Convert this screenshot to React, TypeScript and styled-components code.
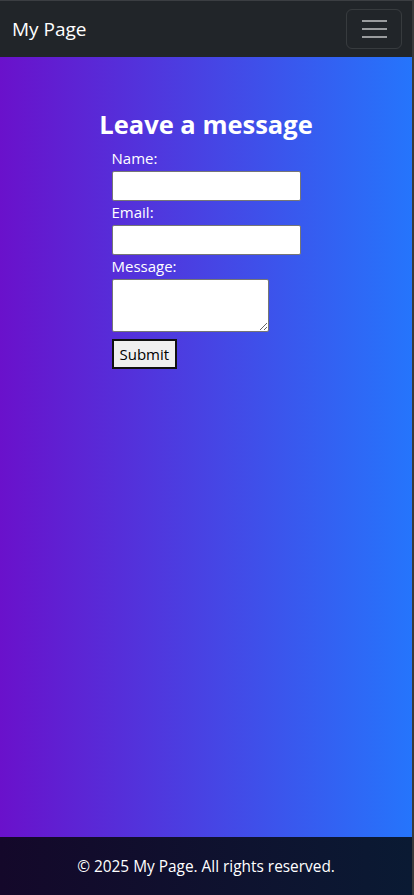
import { FC } from "react";
import styled, { createGlobalStyle } from "styled-components";

const GlobalStyle = createGlobalStyle`
  * {
    box-sizing: border-box;
  }

  body {
    margin: 0;
    font-family: "Open Sans", "Noto Sans", sans-serif;
    background: #212529;
  }
`;

const Page = styled.div`
  display: flex;
  flex-direction: column;
  min-height: 100vh;
  border-top: 1px solid #3b3e42;
  border-right: 2px solid #3a3a3a;
`;

const NavBar = styled.header`
  display: flex;
  align-items: center;
  justify-content: space-between;
  height: 56px;
  padding: 0 10px 0 12px;
  background: #212529;
`;

const Brand = styled.a`
  color: #fff;
  font-size: 19px;
  text-decoration: none;
`;

const Toggler = styled.button`
  display: flex;
  flex-direction: column;
  align-items: center;
  justify-content: center;
  gap: 6px;
  width: 56px;
  height: 40px;
  border: 1px solid rgba(255, 255, 255, 0.1);
  border-radius: 6px;
  background: transparent;
  cursor: pointer;

  span {
    display: block;
    width: 25px;
    height: 2px;
    background: rgba(255, 255, 255, 0.55);
  }
`;

const Main = styled.main`
  flex: 1;
  display: flex;
  flex-direction: column;
  align-items: center;
  padding-top: 50px;
  background: linear-gradient(to right, #6a11cb, #2575fc);
  color: #fff;
`;

const Title = styled.h2`
  margin: 0 0 6px;
  font-size: 25.5px;
  font-weight: 700;
  line-height: 34px;
`;

const Form = styled.form`
  display: flex;
  flex-direction: column;
  align-items: flex-start;
  width: 189px;
`;

const Label = styled.label`
  display: block;
  margin: 1px 0 3px;
  font-size: 15px;
  line-height: 20px;
`;

const Input = styled.input`
  width: 189px;
  height: 30px;
  padding: 2px 4px;
  border: 1px solid #767676;
  border-radius: 2px;
  background: #fff;
  font-size: 15px;
`;

const TextArea = styled.textarea`
  width: 157px;
  height: 53px;
  padding: 2px 4px;
  border: 1px solid #767676;
  border-radius: 2px;
  background: #fff;
  font-size: 15px;
  resize: both;
`;

const SubmitButton = styled.button`
  margin-top: 7px;
  height: 30px;
  padding: 0 6px;
  border: 2px solid #111;
  border-radius: 0;
  background: #efefef;
  color: #000;
  font-family: "Open Sans", "Noto Sans", sans-serif;
  font-size: 15px;
`;

const Footer = styled.footer`
  display: flex;
  align-items: center;
  justify-content: center;
  height: 58px;
  background: linear-gradient(to right, #14082a, #0a1a33);
  color: #fff;
  font-size: 15.4px;
`;

const App: FC = () => {
  return (
    <>
      <GlobalStyle />
      <Page>
        <NavBar>
          <Brand href="#">My Page</Brand>
          <Toggler type="button" aria-label="Toggle navigation">
            <span />
            <span />
            <span />
          </Toggler>
        </NavBar>
        <Main>
          <Title>Leave a message</Title>
          <Form onSubmit={(e) => e.preventDefault()}>
            <Label htmlFor="name">Name:</Label>
            <Input id="name" type="text" />
            <Label htmlFor="email">Email:</Label>
            <Input id="email" type="email" />
            <Label htmlFor="message">Message:</Label>
            <TextArea id="message" />
            <SubmitButton type="submit">Submit</SubmitButton>
          </Form>
        </Main>
        <Footer>© 2025 My Page. All rights reserved.</Footer>
      </Page>
    </>
  );
};

export default App;
